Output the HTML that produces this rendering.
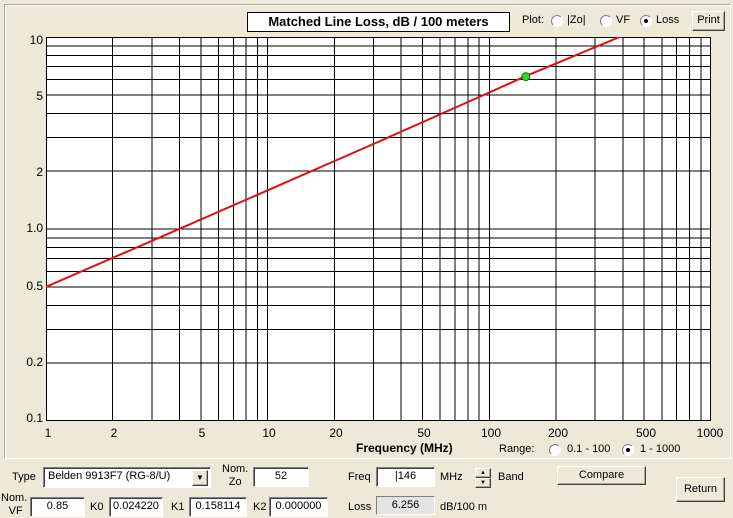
<!DOCTYPE html>
<html><head><meta charset="utf-8"><style>
*{box-sizing:border-box}
body{margin:0;width:733px;height:518px;background:#ece9d8;font-family:"Liberation Sans",Arial,sans-serif;font-size:11px;color:#000;position:relative;overflow:hidden}
.a{position:absolute;white-space:nowrap}
.panel{position:absolute;left:4px;top:4px;width:727px;height:455px;border-top:1px solid #aca899;border-left:1px solid #aca899;border-right:1px solid #fff;border-bottom:1px solid #fff;box-shadow:inset 1px 1px 0 #fff}
.inp{position:absolute;background:#fff;border-top:1px solid #808080;border-left:1px solid #808080;border-right:1px solid #fff;border-bottom:1px solid #fff;box-shadow:inset 1px 1px 0 #404040;text-align:center;line-height:17px}
.btn{position:absolute;background:#ece9d8;border:1px solid;border-color:#fff #404040 #404040 #fff;box-shadow:inset -1px -1px 0 #aca899;text-align:center}
.rad{position:absolute;width:12px;height:12px;border-radius:50%;background:#fff;border:1px solid #808080;border-right-color:#fff;border-bottom-color:#fff}
.rad.on::after{content:"";position:absolute;left:3px;top:3px;width:4px;height:4px;border-radius:50%;background:#000}
.yl{position:absolute;right:690px;text-align:right;font-size:12px}
.xl{position:absolute;top:426px;transform:translateX(-50%);font-size:12px}
</style></head><body>
<div class="panel"></div>
<div class="a" style="left:247px;top:12px;width:263px;height:20px;border:1px solid #000;background:#fff;font-weight:bold;font-size:13px;text-align:center;line-height:18px">Matched Line Loss, dB / 100 meters</div>
<div class="a" style="left:522px;top:14px">Plot:</div>
<div class="rad" style="left:551px;top:15px"></div><div class="a" style="left:567px;top:14px">|Zo|</div>
<div class="rad" style="left:600px;top:15px"></div><div class="a" style="left:616px;top:14px">VF</div>
<div class="rad on" style="left:640px;top:15px"></div><div class="a" style="left:656px;top:14px">Loss</div>
<div class="btn" style="left:692px;top:11px;width:33px;height:20px;line-height:17px">Print</div>

<svg class="a" style="left:0;top:0" width="733" height="460">
<rect x="46" y="37" width="665" height="384" fill="#fff"/>
<g stroke="#000" stroke-width="1" shape-rendering="crispEdges">
<path d="M112.7 37V421M151.8 37V421M179.5 37V421M200.9 37V421M218.5 37V421M233.3 37V421M246.2 37V421M257.5 37V421M267.7 37V421M334.4 37V421M373.5 37V421M401.2 37V421M422.6 37V421M440.2 37V421M455 37V421M467.9 37V421M479.2 37V421M489.3 37V421M556 37V421M595.1 37V421M622.8 37V421M644.2 37V421M661.9 37V421M676.6 37V421M689.5 37V421M700.8 37V421"/>
<path d="M46 363.2H711M46 329.4H711M46 305.4H711M46 286.8H711M46 271.6H711M46 258.7H711M46 247.6H711M46 237.8H711M46 229H711M46 171.2H711M46 137.4H711M46 113.4H711M46 94.8H711M46 79.6H711M46 66.7H711M46 55.6H711M46 45.8H711"/>
<rect x="46.5" y="37.5" width="664" height="383" fill="none"/>
</g>
<clipPath id="c"><rect x="46" y="37" width="665" height="384"/></clipPath>
<polyline clip-path="url(#c)" fill="none" stroke="#e01010" stroke-width="2" points="46,286.8 151.8,240.9 267.7,190.3 373.4,144 489.3,92.5 525.8,76.1 622,36 640,28"/>
<circle cx="525.8" cy="76.6" r="4" fill="#22dd22" stroke="#117711" stroke-width="1"/>
</svg>

<div class="yl" style="top:33px">10</div>
<div class="yl" style="top:89px">5</div>
<div class="yl" style="top:165px">2</div>
<div class="yl" style="top:221px">1.0</div>
<div class="yl" style="top:279px">0.5</div>
<div class="yl" style="top:355px">0.2</div>
<div class="yl" style="top:411px">0.1</div>

<div class="xl" style="left:48px">1</div>
<div class="xl" style="left:114px">2</div>
<div class="xl" style="left:202px">5</div>
<div class="xl" style="left:269px">10</div>
<div class="xl" style="left:336px">20</div>
<div class="xl" style="left:424px">50</div>
<div class="xl" style="left:491px">100</div>
<div class="xl" style="left:558px">200</div>
<div class="xl" style="left:646px">500</div>
<div class="xl" style="left:710px">1000</div>

<div class="a" style="left:356px;top:441px;font-weight:bold;font-size:12px">Frequency (MHz)</div>
<div class="a" style="left:499px;top:443px">Range:</div>
<div class="rad" style="left:549px;top:444px"></div><div class="a" style="left:567px;top:443px">0.1 - 100</div>
<div class="rad on" style="left:622px;top:444px"></div><div class="a" style="left:640px;top:443px">1 - 1000</div>

<div class="a" style="left:12px;top:471px">Type</div>
<div class="inp" style="left:43px;top:467px;width:168px;height:21px;text-align:left;padding-left:4px">Belden 9913F7 (RG-8/U)</div>
<div class="btn" style="left:192px;top:470px;width:16px;height:16px;font-size:8px;line-height:14px">▼</div>
<div class="a" style="left:222px;top:463px;text-align:center;line-height:13px">Nom.<br>Zo</div>
<div class="inp" style="left:253px;top:467px;width:56px;height:20px">52</div>
<div class="a" style="left:348px;top:471px">Freq</div>
<div class="inp" style="left:376px;top:467px;width:59px;height:20px">|146</div>
<div class="a" style="left:440px;top:471px">MHz</div>
<div class="btn" style="left:475px;top:468px;width:16px;height:10px;font-size:6px;line-height:8px">▲</div>
<div class="btn" style="left:475px;top:478px;width:16px;height:10px;font-size:6px;line-height:8px">▼</div>
<div class="a" style="left:498px;top:471px">Band</div>
<div class="btn" style="left:557px;top:466px;width:89px;height:19px;line-height:16px">Compare</div>
<div class="btn" style="left:676px;top:477px;width:49px;height:25px;line-height:22px">Return</div>

<div class="a" style="left:1px;top:492px;text-align:center;line-height:13px">Nom.<br>&nbsp;VF</div>
<div class="inp" style="left:30px;top:497px;width:55px;height:20px">0.85</div>
<div class="a" style="left:90px;top:501px">K0</div>
<div class="inp" style="left:109px;top:497px;width:54px;height:20px">0.024220</div>
<div class="a" style="left:171px;top:501px">K1</div>
<div class="inp" style="left:189px;top:497px;width:58px;height:20px">0.158114</div>
<div class="a" style="left:253px;top:501px">K2</div>
<div class="inp" style="left:269px;top:497px;width:59px;height:20px">0.000000</div>
<div class="a" style="left:348px;top:501px">Loss</div>
<div class="inp" style="left:376px;top:496px;width:59px;height:19px;background:#e4e4e4;box-shadow:none">6.256</div>
<div class="a" style="left:440px;top:501px">dB/100 m</div>
</body></html>
